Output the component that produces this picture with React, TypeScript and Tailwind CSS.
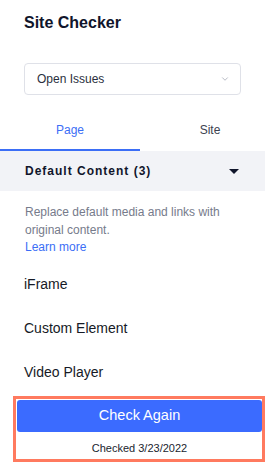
import { ChevronDown } from "lucide-react"

const items = ["iFrame", "Custom Element", "Video Player"]

export default function App() {
    return (
        <div className="w-[271px] h-[463px] overflow-hidden bg-white font-['Liberation_Sans',Arial,sans-serif]">
            <div className="w-[265px]">
                <div className="px-6 pt-[13px] text-[16px] leading-[20px] font-bold text-[#10152b]">
                    Site Checker
                </div>

                <div className="mx-6 mt-[30px] h-[32px] rounded-[4px] border border-[#dfe1e8] flex items-center justify-between pl-[12px] pr-[10px]">
                    <span className="text-[12px] text-[#2a2f3d]">Open Issues</span>
                    <ChevronDown size={10} strokeWidth={1.5} className="text-[#8b90a0]" />
                </div>

                <div className="mt-[16px] flex h-[40px]">
                    <div className="w-[140px] shrink-0 flex items-center justify-center text-[12px] text-[#3b6ef6] border-b-2 border-[#3b6ef6]">
                        Page
                    </div>
                    <div className="w-[140px] shrink-0 flex items-center justify-center text-[12px] text-[#3d4250] border-b-2 border-transparent">
                        Site
                    </div>
                </div>

                <div className="h-[40px] bg-[#f2f3f7] flex items-center justify-between pl-[25px] pr-[26px]">
                    <span className="text-[12px] font-bold tracking-[1px] text-[#10152b]">Default Content (3)</span>
                    <svg width="10" height="5" viewBox="0 0 10 5">
                        <path d="M0 0 L10 0 L5 5 Z" fill="#10152b" />
                    </svg>
                </div>

                <div className="px-[25px] pt-[13px] text-[12px] leading-[17.5px] text-[#767b8b]">
                    Replace default media and links with original content.
                    <div className="text-[#3b6ef6]">Learn more</div>
                </div>

                <div className="pt-[6px]">
                    {items.map((item) => (
                        <div key={item} className="h-[44px] flex items-center px-6 text-[14px] text-[#161a26]">
                            {item}
                        </div>
                    ))}
                </div>
            </div>

            <div className="ml-[13px] mt-[1px] w-[252px] h-[66px] border-[3px] border-[#ff7a5f] pt-[1px] pl-[1px]">
                <div className="h-[32px] rounded-[3px] bg-[#3b6bff] flex items-center justify-center text-[14.5px] text-white">
                    Check Again
                </div>
                <div className="pt-[10px] text-center text-[11px] leading-[13px] text-[#20242e]">
                    Checked 3/23/2022
                </div>
            </div>
        </div>
    )
}
